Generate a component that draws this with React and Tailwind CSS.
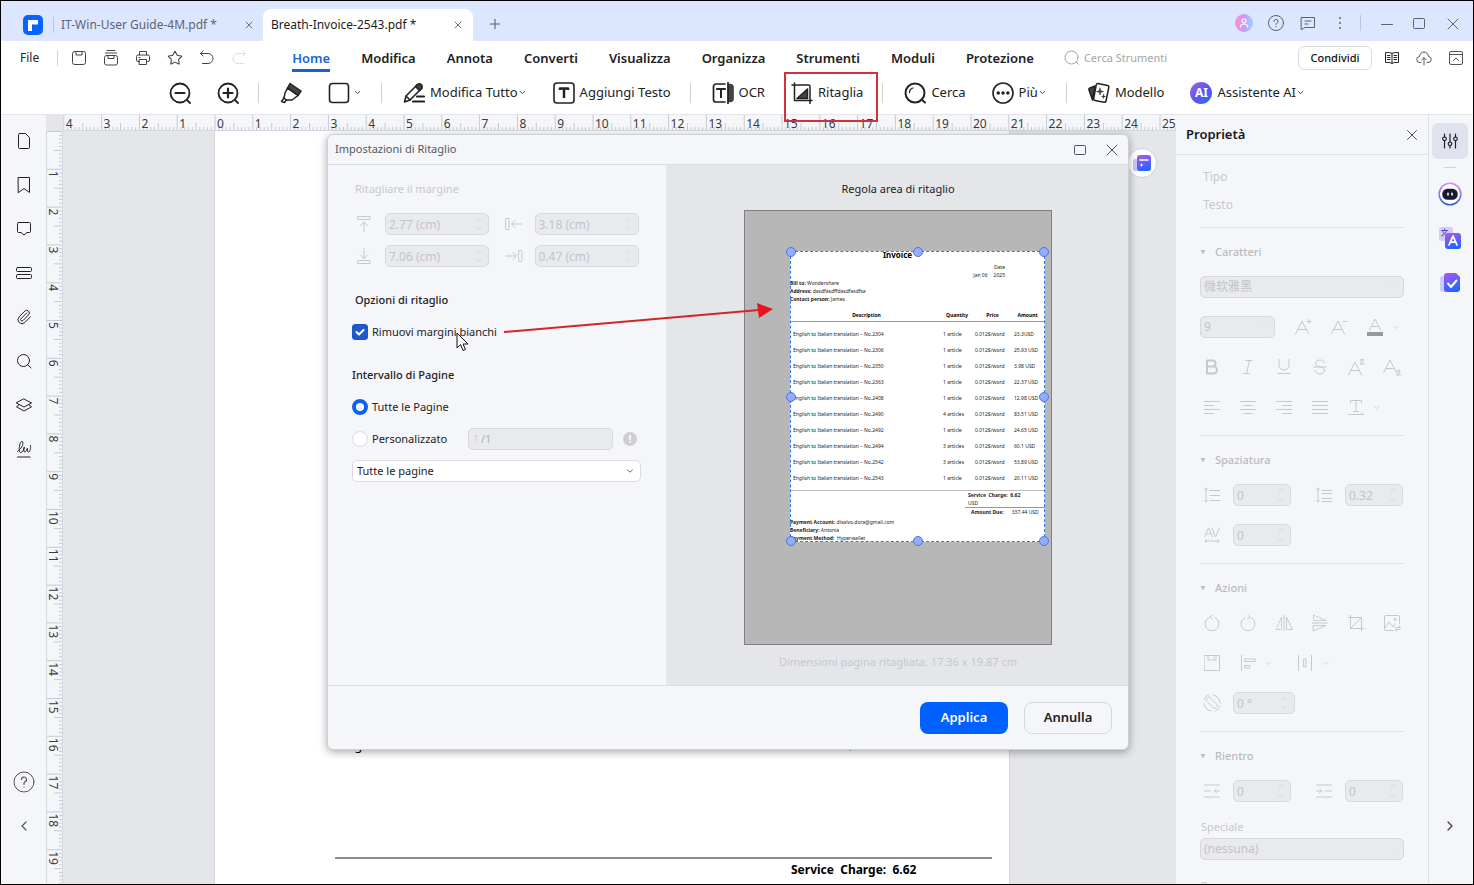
import React, { useState } from 'react';
import { ChevronDown, ChevronUp, ChevronLeft, ChevronRight, X, Star, Paperclip, Plus } from 'lucide-react';

const Svg = ({ w = 16, h, vb, sw = 1, className = '', children }) => (
  <svg
    width={w}
    height={h ?? w}
    viewBox={vb ?? `0 0 ${w} ${h ?? w}`}
    fill="none"
    stroke="currentColor"
    strokeWidth={sw}
    strokeLinecap="round"
    strokeLinejoin="round"
    className={`shrink-0 ${className}`}
    aria-hidden="true"
  >
    {children}
  </svg>
);

const IconButton = ({ label, className = '', children }) => (
  <button type="button" aria-label={label} className={`flex shrink-0 items-center justify-center ${className}`}>
    {children}
  </button>
);

const CM = 37.8;

/* ---------- Title bar ---------- */

const TitleBar = () => (
  <header className="flex h-10 shrink-0 items-center bg-[#dde6ff] text-[#5a6079]">
    <Svg w={20} className="ml-[22px] mt-2">
      <rect width="20" height="20" rx="5" fill="#0a62ff" stroke="none" />
      <path d="M5 5h10v5h-5v2H9v4H5z" fill="#fff" stroke="none" />
      <path d="M9.500 10h5.500M9.500 10v2" stroke="#0a62ff" strokeWidth="1" />
    </Svg>
    <span className="ml-2.5 mt-2 h-4 w-px bg-[#bcc6e2]" />
    <button type="button" className="ml-[7px] mt-2 flex w-[202px] items-center justify-between pr-2 text-xs text-[#5f6472]">
      IT-Win-User Guide-4M.pdf *
      <X size={12} strokeWidth={1.8} />
    </button>
    <button type="button" className="mt-2 flex h-8 w-[210px] items-center justify-between rounded-t-lg bg-white px-2 text-xs text-[#1c1d22]">
      Breath-Invoice-2543.pdf *
      <X size={12} strokeWidth={1.8} className="mr-px text-[#5a6079]" />
    </button>
    <IconButton label="Nuova scheda" className="ml-[14px] mt-1.5 size-4">
      <Plus size={16} strokeWidth={1.6} />
    </IconButton>
    <div className="ml-auto mt-1 flex items-center">
      <span className="flex size-[18px] items-center justify-center rounded-full bg-linear-to-r from-[#ff8fc4] via-[#c79bf5] to-[#8fd3ff] text-white">
        <Svg w={12} sw={1.2}>
          <circle cx="6" cy="4" r="2" />
          <path d="M2.500 10c0-2 1.500-3 3.500-3s3.500 1 3.500 3" />
        </Svg>
      </span>
      <IconButton label="Aiuto" className="ml-[15px]">
        <Svg w={16}>
          <circle cx="8" cy="8" r="7.500" />
          <path d="M6 6.500a2 2 0 1 1 2.700 1.800c-.5.200-.7.500-.7 1.200M8 11.500v.3" />
        </Svg>
      </IconButton>
      <IconButton label="Messaggi" className="ml-4">
        <Svg w={16}>
          <path d="M1.500 2.500h13v10H5l-3.500 2zM5 6h6M5 9h3" />
        </Svg>
      </IconButton>
      <IconButton label="Altro" className="ml-4">
        <Svg w={16}>
          <path d="M8 3v.1M8 8v.1M8 13v.1" strokeWidth="2" />
        </Svg>
      </IconButton>
      <span className="ml-3 h-4 w-px bg-[#bcc6e2]" />
      <IconButton label="Riduci" className="ml-[18px]">
        <Svg w={16}><path d="M2.500 9.500h11" /></Svg>
      </IconButton>
      <IconButton label="Ingrandisci" className="ml-4">
        <Svg w={16}><rect x="2.500" y="3.500" width="11" height="10" rx="1" /></Svg>
      </IconButton>
      <IconButton label="Chiudi" className="ml-[18px] mr-3">
        <Svg w={16}><path d="M3 4l10 10M13 4L3 14" /></Svg>
      </IconButton>
    </div>
  </header>
);

/* ---------- Menu row ---------- */

const menuTabs = ['Home', 'Modifica', 'Annota', 'Converti', 'Visualizza', 'Organizza', 'Strumenti', 'Moduli', 'Protezione'];

const MenuRow = () => (
  <nav className="flex h-[34px] shrink-0 items-center text-[13px] text-[#222]">
    <button type="button" className="ml-[19px] text-xs">File</button>
    <span className="ml-[18px] h-4 w-px bg-[#d3d5da]" />
    <div className="ml-[13px] flex items-center gap-4 text-[#444]">
      <IconButton label="Salva">
        <Svg w={16}>
          <rect x="1.500" y="1.500" width="13" height="13" rx="2" />
          <path d="M5 1.500v3.500h6V1.500" />
        </Svg>
      </IconButton>
      <IconButton label="Salva tutto">
        <Svg w={16}>
          <rect x="1.500" y="5.500" width="13" height="9.500" rx="2" />
          <path d="M2.500 3h11M4 .5h8M5 5.500v3h6v-3" />
        </Svg>
      </IconButton>
      <IconButton label="Stampa">
        <Svg w={16}>
          <path d="M4.500 5V1.500h7V5M4.500 11.500H3A1.500 1.500 0 0 1 1.500 10V6.500A1.500 1.500 0 0 1 3 5h10a1.500 1.500 0 0 1 1.500 1.500V10a1.500 1.500 0 0 1-1.500 1.500h-1.500M4.500 9.500h7v5h-7zM4 7.500h1" />
        </Svg>
      </IconButton>
      <IconButton label="Preferiti"><Star size={16} strokeWidth={1.6} /></IconButton>
      <IconButton label="Annulla operazione">
        <Svg w={16}><path d="M4 1L1.500 3.500 4 6M1.500 3.500H9a5 5 0 0 1 0 10H3.500" /></Svg>
      </IconButton>
      <IconButton label="Ripeti operazione" className="text-[#dcdde0]">
        <Svg w={16}><path d="M12 1l2.500 2.500L12 6M14.500 3.500H7a5 5 0 0 0 0 10h5.500" /></Svg>
      </IconButton>
    </div>
    <div className="ml-[45px] flex h-full items-center gap-[31px] font-semibold">
      {menuTabs.map((t, i) => (
        <button
          key={t}
          type="button"
          className={`h-7 border-b-[3px] pt-0.5 leading-5 ${i === 0 ? 'border-[#1b5fd0] text-[#1b64d8]' : 'border-transparent'}`}
        >
          {t}
        </button>
      ))}
    </div>
    <label className="ml-[30px] flex items-center gap-1 text-[#a3a5aa]">
      <Svg w={16}>
        <circle cx="7.500" cy="7.500" r="6.500" />
        <path d="M12 12l2.500 2.500" />
      </Svg>
      <input type="text" aria-label="Cerca Strumenti" placeholder="Cerca Strumenti" className="w-28 bg-transparent text-[11px] outline-none placeholder:text-[#a3a5aa]" />
    </label>
    <button type="button" className="ml-auto h-6 w-[74px] rounded-md border border-[#dcdde1] text-[11px] font-medium text-[#111]">Condividi</button>
    <IconButton label="Lettura" className="ml-3">
      <Svg w={16} className="text-[#222]">
        <path d="M8 3.500C7 2.500 5 2.500 1.500 2.500v10c3.500 0 5.500 0 6.500 1 1-1 3-1 6.500-1v-10C11 2.500 9 2.500 8 3.500zM8 3.500v10M3.500 5.500H6M3.500 7.500H6M3.500 9.500H6M10 5.500h2.500M10 7.500h2.500M10 9.500h2.500" />
      </Svg>
    </IconButton>
    <IconButton label="Carica" className="ml-4 text-[#555]">
      <Svg w={16}>
        <path d="M5 12.500H4A3 3 0 0 1 3.500 6.500a4.500 4.500 0 0 1 9 0A3 3 0 0 1 12 12.500h-1M8 15V8M5.500 10L8 7.500l2.500 2.500" />
      </Svg>
    </IconButton>
    <IconButton label="Comprimi barra" className="ml-4 mr-[9px] text-[#555]">
      <Svg w={16}>
        <rect x="1.500" y="1.500" width="13" height="13" rx="1.500" />
        <path d="M1.500 4.500h13M5.500 10.500L8 8l2.500 2.500" />
      </Svg>
    </IconButton>
  </nav>
);

/* ---------- Toolbar ---------- */

const Tool = ({ label, icon, text, chevron }) => (
  <button type="button" aria-label={text ? undefined : label} className="mx-[13px] flex shrink-0 items-center text-[13px] text-[#222]">
    {icon}
    {text && <span className="ml-[5px]">{text}</span>}
    {chevron && <ChevronDown size={9} strokeWidth={2.200} className={text ? '' : 'ml-[3px]'} />}
  </button>
);

const Separator = () => <span className="ml-1.5 mr-2 h-5 w-px shrink-0 bg-[#cfd1d6]" />;

const Toolbar = () => (
  <div className="flex h-10 shrink-0 items-center border-b border-[#e3e5ea] pb-1 pl-[155px] text-[#444]">
    <Tool label="Riduci zoom" icon={
      <Svg w={22} sw={1.800}><circle cx="11" cy="11" r="9.500" /><path d="M18 18l3 3" /><path d="M6.500 11h9" strokeWidth="2.200" /></Svg>
    } />
    <Tool label="Aumenta zoom" icon={
      <Svg w={22} sw={1.800}><circle cx="11" cy="11" r="9.500" /><path d="M18 18l3 3" /><path d="M6.500 11h9M11 6.500v9" strokeWidth="2.200" /></Svg>
    } />
    <Separator />
    <Tool label="Evidenzia" icon={
      <Svg w={22} sw={1.500}>
        <path d="M10 1.500L21 9l-3 4.500L7.500 6z" fill="#444" />
        <path d="M7.500 6l10.500 7.500-6 4.500H6.500L4 16l1-5z" />
        <path d="M4 16l-2.500 3.500 3 1 2-2.500" />
      </Svg>
    } />
    <Tool label="Forme" chevron icon={
      <Svg w={22} sw={1.600}><rect x="1.500" y="1.500" width="19" height="19" rx="3" /></Svg>
    } />
    <Separator />
    <Tool text="Modifica Tutto" chevron icon={
      <Svg w={22} sw={1.600}>
        <path d="M1.500 20L3 14 14 3a3 3 0 0 1 4 4L7 18z" />
        <path d="M12.500 4.500L15 2.200a3 3 0 0 1 4 4L16.500 8.500z" fill="#444" />
        <path d="M3 14l4 4" />
        <path d="M14 14.500h7M10 19.500h11" strokeWidth="2.200" />
      </Svg>
    } />
    <Tool text="Aggiungi Testo" icon={
      <Svg w={22} sw={1.600}>
        <rect x="1" y="1" width="20" height="20" rx="3" />
        <path d="M7 8V6.500h8V8M11 7v9" strokeWidth="2.500" strokeLinecap="butt" />
      </Svg>
    } />
    <Separator />
    <Tool text="OCR" icon={
      <Svg w={22} sw={1.700}>
        <path d="M13 2H4a2.500 2.500 0 0 0-2.500 2.500v13A2.500 2.500 0 0 0 4 20h9" />
        <path d="M5 8V7h8v1M9 7.500V16" strokeWidth="2" strokeLinecap="butt" />
        <path d="M16.500 2.500h2A2.500 2.500 0 0 1 21 5v12a2.500 2.500 0 0 1-2.500 2.500h-2z" fill="#444" stroke="#444" />
        <path d="M16 .5v21" />
      </Svg>
    } />
    <Tool text="Ritaglia" icon={
      <Svg w={22} sw={1.500}>
        <path d="M3.500 1v17.500H21M1 3h16.500a1.500 1.500 0 0 1 1.500 1.500V21.500" />
        <path d="M6 16.500L16.500 7v9.500z" fill="#444" />
      </Svg>
    } />
    <Separator />
    <Tool text="Cerca" icon={
      <Svg w={22} sw={2}><circle cx="11" cy="11" r="9.500" /><path d="M17.500 17.500l3.500 3" /><path d="M5.500 10.500A5 5 0 0 1 9 6" strokeWidth="1.300" /></Svg>
    } />
    <Tool text="Più" chevron icon={
      <Svg w={22} sw={1.600}><circle cx="11" cy="11" r="10" /><path d="M6.200 11h.1M11 11h.1M15.800 11h.1" strokeWidth="3.400" /></Svg>
    } />
    <Separator />
    <Tool text="Modello" icon={
      <Svg w={22} sw={1.500}>
        <path d="M7 4L2 6c-1 .4-1.300 1-1 2l3.500 10z" fill="#444" />
        <path d="M10 1.500l9.500 2c1 .2 1.500 1 1.300 2l-2.800 13.500c-.2 1-1 1.500-2 1.300l-9-1.800c-1-.2-1.500-1-1.300-2L8.200 3c.2-1 .9-1.600 1.800-1.500z" fill="#fff" />
        <path d="M12 6l.8 2.700 2.700.8-2.700.8L12 13l-.8-2.700-2.700-.8 2.700-.8zM15.500 12.500l.4 1.600 1.600.4-1.600.4-.4 1.600-.4-1.600-1.600-.4 1.600-.4z" fill="#444" strokeWidth=".5" />
      </Svg>
    } />
    <Tool text="Assistente AI" chevron icon={
      <span className="flex size-[22px] items-center justify-center rounded-full bg-linear-to-br from-[#a55cf0] via-[#5b57f0] to-[#1668ff] text-xs font-bold text-white">AI</span>
    } />
  </div>
);

/* ---------- Rulers ---------- */

const tickSet = (from, to) => {
  const ticks = [];
  for (let i = from * 10; i <= to * 10; i++) ticks.push(i);
  return ticks;
};

const HorizontalRuler = () => (
  <svg className="h-4 min-w-0 flex-1 border-b border-[#d5d8e0] bg-[#f5f6fa]" aria-hidden="true">
    {tickSet(-4, 26).map((i) => (
      <line key={i} x1={152 + (i * CM) / 10} x2={152 + (i * CM) / 10} y1={i % 10 === 0 ? 0 : i % 5 === 0 ? 8 : 12} y2="16" stroke="#c6cad5" />
    ))}
    {Array.from({ length: 30 }, (_, n) => n - 4).map((n) => (
      <text key={n} x={154 + n * CM} y="13" fontSize="12" fill="#3a3b40">{Math.abs(n)}</text>
    ))}
  </svg>
);

const VerticalRuler = () => (
  <svg className="w-[17px] shrink-0 border-x border-[#d5d8e0] bg-[#f5f6fa]" aria-hidden="true">
    {tickSet(0, 20).map((i) => (
      <line key={i} y1={0.500 + (i * CM) / 10} y2={0.500 + (i * CM) / 10} x1={i % 10 === 0 ? 0 : i % 5 === 0 ? 7 : 12} x2="16" stroke="#c6cad5" />
    ))}
    {Array.from({ length: 19 }, (_, n) => n + 1).map((n) => (
      <text key={n} transform={`translate(2 ${2 + n * CM}) rotate(90)`} fontSize="12" fill="#3a3b40">{n}</text>
    ))}
  </svg>
);

/* ---------- Left rail ---------- */

const leftItems = [
  ['Miniature', <Svg w={16}><path d="M3.500 .5h6l4 4v10a1 1 0 0 1-1 1h-9a1 1 0 0 1-1-1v-13a1 1 0 0 1 1-1z" /></Svg>],
  ['Segnalibri', <Svg w={16}><path d="M2.500 .5h11v15L8 11.500 2.500 15.500z" /></Svg>],
  ['Commenti', <Svg w={16}><path d="M2.500 1.500h11a1 1 0 0 1 1 1v8a1 1 0 0 1-1 1H11l-3 2.500-3-2.500H2.500a1 1 0 0 1-1-1v-8a1 1 0 0 1 1-1z" /></Svg>],
  ['Campi', <Svg w={16}><rect x=".5" y="2.500" width="15" height="4" rx="1" /><rect x=".5" y="9.500" width="15" height="4" rx="1" /></Svg>],
  ['Allegati', <Paperclip size={16} strokeWidth={1.500} />],
  ['Cerca', <Svg w={16}><circle cx="7.500" cy="7.500" r="6" /><path d="M12 12l3 3" /></Svg>],
  ['Livelli', <Svg w={16}><path d="M8 2l7.500 4L8 10 .5 6zM3 8L.5 9.800 8 14l7.500-4.200L13 8" /></Svg>],
  ['Firma', <Svg w={16} h={18}><path d="M1.500 11.500C5 9 7.500 5 6.800 2.200 6.300.2 4.500 1.500 3.700 5c-.7 3.500-1 7.500 1 7.500 1.800 0 2.800-2.500 3.600-5.500-.5 3-.6 5 .4 5 1.500 0 2.500-3 2.800-4-.2 2-.2 4 1 4 1.700 0 2.500-4 2-6.500M1.500 17h12.500" /></Svg>],
];

const LeftRail = () => (
  <aside className="flex w-[45px] shrink-0 flex-col bg-[#f5f6fa] pt-1 text-[#222]">
    {leftItems.map(([label, icon]) => (
      <IconButton key={label} label={label} className="h-11">{icon}</IconButton>
    ))}
    <IconButton label="Guida" className="mt-auto h-11 text-[#555]">
      <Svg w={22}>
        <circle cx="11" cy="11" r="10" />
        <path d="M8.500 8.500a2.500 2.500 0 1 1 3.500 2.300c-.7.400-1 .8-1 1.700v1M11 16v.2" strokeWidth="1.200" />
      </Svg>
    </IconButton>
    <IconButton label="Comprimi" className="mb-9 h-11 text-[#555]">
      <ChevronLeft size={16} strokeWidth={1.800} />
    </IconButton>
  </aside>
);

/* ---------- Right rail ---------- */

const RightRail = () => (
  <aside className="flex w-[45px] shrink-0 flex-col items-center border-l border-[#dcdee4] bg-[#f5f6fa] pr-0.5 pt-2">
    <IconButton label="Proprietà" className="size-9 rounded-md bg-[#dfe3ed] text-[#222]">
      <Svg w={16} sw={1.200}>
        <path d="M2.500 1v3M2.500 7.500V15M8 1v8M8 12.500V15M13.500 1v3M13.500 7.500V15" />
        <circle cx="2.500" cy="5.800" r="1.800" /><circle cx="8" cy="10.800" r="1.800" /><circle cx="13.500" cy="5.800" r="1.800" />
      </Svg>
    </IconButton>
    <span className="my-2 h-px w-3 bg-[#d0d3da]" />
    <IconButton label="Assistente" className="h-9">
      <Svg w={24} sw={1.500}>
        <defs>
          <linearGradient id="ring" x1="0" y1="0" x2="0" y2="1"><stop stopColor="#e38af0" /><stop offset="1" stopColor="#2d62d8" /></linearGradient>
        </defs>
        <circle cx="12" cy="12" r="10.800" stroke="url(#ring)" fill="#fff" />
        <rect x="5" y="7.500" width="14" height="9.500" rx="4.500" fill="#181a30" stroke="#181a30" />
        <path d="M10 11.200v1.800M14 11.200v1.800" stroke="#fff" strokeWidth="1.600" />
      </Svg>
    </IconButton>
    <IconButton label="Traduci" className="h-[52px]">
      <Svg w={24}>
        <defs>
          <linearGradient id="tile" x1="0.300" y1="0" x2="0.600" y2="1"><stop stopColor="#a35af0" /><stop offset="1" stopColor="#1c66ff" /></linearGradient>
        </defs>
        <rect x="1" y="1" width="14" height="14" rx="2.500" fill="#d3cdf8" stroke="none" />
        <path d="M3.500 4.500h6M6.500 3v1.500M8.500 4.500c-.5 2.500-2.500 4.500-5 5.500M4.500 4.500c.5 2 1.500 3.500 3 4.500" stroke="#4c4bd8" />
        <rect x="7" y="7" width="16" height="16" rx="3" fill="url(#tile)" stroke="none" />
        <path d="M11 19l4-9 4 9M12.300 16.200h5" stroke="#fff" strokeWidth="1.800" />
      </Svg>
    </IconButton>
    <IconButton label="Controlla" className="h-9">
      <Svg w={24}>
        <rect x="2" y="6" width="12" height="16" rx="3" fill="#c9cdfb" stroke="none" />
        <path d="M9 3h9l4 4v12a3 3 0 0 1-3 3H9a3 3 0 0 1-3-3V6a3 3 0 0 1 3-3z" fill="url(#tile)" stroke="none" />
        <path d="M10 13.500l3 3.500 5.500-6.500" stroke="#fff" strokeWidth="2" />
      </Svg>
    </IconButton>
    <IconButton label="Espandi" className="mb-9 mt-auto h-11 text-[#444]">
      <ChevronRight size={16} strokeWidth={2} />
    </IconButton>
  </aside>
);

/* ---------- Shared form fields ---------- */

const NumberField = ({ label, value, className = 'w-[58px]' }) => (
  <span className={`relative flex shrink-0 ${className}`}>
    <input
      type="text"
      disabled
      aria-label={label}
      defaultValue={value}
      className="h-[22px] w-full rounded-[5px] border border-[#d6d8dd] bg-[#e9eaee] px-[3px] text-xs text-[#c2c4c9]"
    />
    <span className="pointer-events-none absolute inset-y-0 right-1.5 flex flex-col justify-center text-[#cdcfd4]">
      <ChevronUp size={9} strokeWidth={2} />
      <ChevronDown size={9} strokeWidth={2} />
    </span>
  </span>
);

const DisabledSelect = ({ label, value, className = 'w-full' }) => (
  <span className={`relative flex ${className}`}>
    <select disabled aria-label={label} className="h-[22px] w-full appearance-none rounded-[5px] border border-[#d6d8dd] bg-[#e9eaee] px-[3px] text-xs text-[#c2c4c9] opacity-100">
      <option>{value}</option>
    </select>
    <ChevronDown size={10} strokeWidth={2} className="pointer-events-none absolute right-1.5 top-1.5 text-[#dcdee2]" />
  </span>
);

/* ---------- Properties panel ---------- */

const Section = ({ title, children }) => (
  <section className="border-t border-[#dfe1e6] pb-2 pt-[9px]">
    <h3 className="flex h-[30px] items-center text-[11px] font-medium text-[#b9bbc1]">
      <Svg w={6} className="mr-[9px]"><path d="M.5 1h5L3 5.500z" fill="currentColor" stroke="none" /></Svg>
      {title}
    </h3>
    {children}
  </section>
);

const Row = ({ children }) => <div className="flex h-10 items-center gap-3">{children}</div>;

const Cell = ({ label, children }) => (
  <button type="button" disabled aria-label={label} className="flex w-6 shrink-0 items-center justify-center">
    {children}
  </button>
);

const Chev = () => <ChevronDown size={9} strokeWidth={2} className="-ml-2 shrink-0" />;

const Pair = ({ label, icon, value }) => (
  <div className="flex items-center gap-[9px]">
    <span className="flex w-6 justify-center">{icon}</span>
    <NumberField label={label} value={value} />
  </div>
);

const PropertiesPanel = () => (
  <aside className="flex w-[252px] shrink-0 flex-col overflow-hidden bg-[#f5f6fa] text-[#c6c8ce]">
    <div className="flex h-10 shrink-0 items-center justify-between border-b border-[#dfe1e6] px-2.5">
      <h2 className="text-[13px] font-semibold text-[#17181c]">Proprietà</h2>
      <IconButton label="Chiudi pannello"><Svg w={12} className="text-[#4c5270]"><path d="M1.500 1.500l9 9M10.500 1.500l-9 9" /></Svg></IconButton>
    </div>
    <div className="min-h-0 flex-1 overflow-hidden px-6 pt-2">
      <div className="pb-2 text-xs leading-7">
        <p className="pl-[3px]">Tipo</p>
        <p className="pl-[3px]">Testo</p>
      </div>
      <Section title="Caratteri">
        <Row><DisabledSelect label="Carattere" value="微软雅黑" /></Row>
        <Row>
          <DisabledSelect label="Dimensione" value="9" className="mr-1 w-[75px]" />
          <Cell label="Aumenta dimensione"><Svg w={18}><path d="M1.500 16L8 3l6.500 13M4 11.500h8M13 3.500h4M15 1.500v4" /></Svg></Cell>
          <Cell label="Riduci dimensione"><Svg w={18}><path d="M1.500 16L8 3l6.500 13M4 11.500h8M13 3.500h4" /></Svg></Cell>
          <Cell label="Colore"><Svg w={18}><path d="M3.500 12L9 1l5.500 11M5.500 8.500h7" /><path d="M1 16h16" stroke="#97999e" strokeWidth="4" strokeLinecap="butt" /></Svg></Cell>
          <Chev />
        </Row>
        <Row>
          <Cell label="Grassetto"><Svg w={16} sw={2}><path d="M3 1.500h5.500a3 3 0 0 1 0 6H3zM3 7.500h6.500a3.500 3.500 0 0 1 0 7H3z" /></Svg></Cell>
          <Cell label="Corsivo"><Svg w={16}><path d="M6 1.500h6M3.500 14.500h6M9.500 1.500l-3 13" /></Svg></Cell>
          <Cell label="Sottolineato"><Svg w={16}><path d="M3 .5V6a5 5 0 0 0 10 0V.5M2 14.500h12" /></Svg></Cell>
          <Cell label="Barrato"><Svg w={16}><path d="M12.500 4C12 2 10 1 8 1S3.500 2.200 3.500 4.500c0 4 9 2.500 9 6.500 0 2.500-2.500 4-4.500 4s-4.500-1-5-3.500M1.500 8h13" /></Svg></Cell>
          <Cell label="Apice"><Svg w={18}><path d="M1.500 17L8 4l6.500 13M4 12.500h8" /><path d="M13.500 2.500c.5-1.500 3-1.500 3 0 0 1-3 2.500-3 3.500h3.500" strokeWidth="1.200" /></Svg></Cell>
          <Cell label="Pedice"><Svg w={18} h={18}><path d="M.5 15L7 2l6.500 13M3 10.500h8" /><path d="M14 13.500c.5-1.500 3-1.500 3 0 0 1-3 2-3 3.500h3.500" strokeWidth="1.200" /></Svg></Cell>
        </Row>
        <Row>
          <Cell label="Allinea a sinistra"><Svg w={16}><path d="M.5 2.500h15M.5 6.500h9M.5 10.500h15M.5 14.500h9" /></Svg></Cell>
          <Cell label="Centra"><Svg w={16}><path d="M.5 2.500h15M4 6.500h8M.5 10.500h15M4 14.500h8" /></Svg></Cell>
          <Cell label="Allinea a destra"><Svg w={16}><path d="M.5 2.500h15M6.500 6.500h9M.5 10.500h15M6.500 14.500h9" /></Svg></Cell>
          <Cell label="Giustifica"><Svg w={16}><path d="M.5 2.500h15M.5 6.500h15M.5 10.500h15M.5 14.500h15" /></Svg></Cell>
          <Cell label="Direzione testo"><Svg w={16}><path d="M2.500 4V1.500h11V4M8 1.500v11M5.500 12.500h5M.5 15.500h15M13.500 14l2 1.500" /></Svg></Cell>
          <Chev />
        </Row>
      </Section>
      <Section title="Spaziatura">
        <div className="flex h-10 items-center justify-between pr-px">
          <Pair label="Interlinea" value="0" icon={<Svg w={16}><path d="M2 1v14M.5 2.500L2 1l1.500 1.500M.5 13.500L2 15l1.500-1.500M6 3.500h10M6 8.500h10M6 13.500h10" /></Svg>} />
          <Pair label="Spaziatura paragrafo" value="0.32" icon={<Svg w={16}><path d="M2 1v14M.5 2.500L2 1l1.500 1.500M.5 13.500L2 15l1.500-1.500M6 3.500h10M6 6.500h10M6 11.500h10M6 14.500h10" /></Svg>} />
        </div>
        <div className="flex h-10 items-center">
          <Pair label="Spaziatura caratteri" value="0" icon={<Svg w={16}><path d="M.5 10L4.500 1l4 9M2 7h5M8 1l3.500 9 4-9M1 14h14M2.500 12.500L1 14l1.500 1.500M13.500 12.500L15 14l-1.500 1.500" /></Svg>} />
        </div>
      </Section>
      <Section title="Azioni">
        <Row>
          <Cell label="Ruota a sinistra"><Svg w={16}><path d="M5 2.500a7 7 0 1 0 6 0M8.500 0L6 2l2.500 2.500" /></Svg></Cell>
          <Cell label="Ruota a destra"><Svg w={16}><path d="M11 2.500a7 7 0 1 1-6 0M7.500 0L10 2 7.500 4.500" /></Svg></Cell>
          <Cell label="Rifletti in orizzontale"><Svg w={18} h={16}><path d="M9 .5v15M11.500 2.500v12H17z" /><path d="M6.500 2.500v12H1z" strokeDasharray="2 1.500" /></Svg></Cell>
          <Cell label="Rifletti in verticale"><Svg w={16} h={18}><path d="M.5 9h15M1.500 11.500H14L1.500 17z" /><path d="M1.500 6.500H14L1.500 1z" strokeDasharray="2 1.500" /></Svg></Cell>
          <Cell label="Ritaglia immagine"><Svg w={16}><path d="M2.500 0v13.500H16M0 2.500h13.500V16M3 13L13 3" /></Svg></Cell>
          <Cell label="Sostituisci immagine"><Svg w={17}><path d="M9 15.500H2A1.500 1.500 0 0 1 .5 14V2A1.500 1.500 0 0 1 2 .5h12A1.500 1.500 0 0 1 15.500 2v7M1 13l4-6 4 5 2-3M11 12.500h5.500L15 11M16.500 14.500H11l1.500 1.500" /><circle cx="11" cy="4.500" r="1" /></Svg></Cell>
        </Row>
        <div className="flex h-10 items-center gap-5">
          <div className="flex items-center gap-3">
            <Cell label="Salva immagine"><Svg w={16}><path d="M.5.5h15v15H.5zM4 .5V5h8V.5M10 2v1" /></Svg></Cell>
            <Cell label="Allinea oggetti"><Svg w={16}><path d="M1.500 .5v15M5 4h10M5 6.500h10M5 4v2.500M15 4v2.500M5 10.500h5v2.500H5z" /></Svg></Cell>
            <Chev />
          </div>
          <div className="flex items-center gap-3">
            <Cell label="Distribuisci oggetti"><Svg w={16}><path d="M1.500 .5v15M14.500 .5v15M7 4h2v8H7z" /></Svg></Cell>
            <Chev />
          </div>
        </div>
        <div className="flex h-10 items-center gap-[9px]">
          <span className="flex w-6 justify-center">
            <Svg w={18}><path d="M6.500 3l8.500 8.500-3.500 3.500L3 6.500zM1 5.500A8 8 0 0 1 5.500 1M17 12.500a8 8 0 0 1-4.500 4.500M1 9.500c.5 4 3 6.500 6.500 7.500M17 8.500C16.500 4.500 14 2 10.500 1" /></Svg>
          </span>
          <NumberField label="Rotazione" value="0 °" className="w-[62px]" />
        </div>
      </Section>
      <Section title="Rientro">
        <div className="flex h-10 items-center justify-between pr-px">
          <Pair label="Rientro a destra" value="0" icon={<Svg w={16}><path d="M.5 2h15M.5 14h15M.5 8h6M10.500 8h5M12.500 6l-2 2 2 2" /></Svg>} />
          <Pair label="Rientro a sinistra" value="0" icon={<Svg w={16}><path d="M.5 2h15M.5 14h15M.5 8h5M9 8h6.500M3.500 6l2 2-2 2" /></Svg>} />
        </div>
        <p className="mt-1.5 pl-px text-[11px] leading-5">Speciale</p>
        <div className="mt-px"><DisabledSelect label="Speciale" value="(nessuna)" /></div>
        <p className="mt-4 pl-px text-[11px] leading-5">Per</p>
      </Section>
    </div>
  </aside>
);

/* ---------- Crop preview ---------- */

const items = [
  ['No.2304', '1 article', '23.3USD'],
  ['No.2306', '1 article', '25.93 USD'],
  ['No.2350', '1 article', '3.98 USD'],
  ['No.2363', '1 article', '22.37 USD'],
  ['No.2408', '1 article', '12.98 USD'],
  ['No.2490', '4 articles', '83.51 USD'],
  ['No.2492', '1 article', '24.65 USD'],
  ['No.2494', '3 articles', '60.1 USD'],
  ['No.2542', '3 articles', '53.89 USD'],
  ['No.2543', '1 article', '20.11 USD'],
];

const handles = [
  'left-0 top-0', 'left-1/2 top-0', 'left-full top-0',
  'left-0 top-1/2', 'left-full top-1/2',
  'left-0 top-full', 'left-1/2 top-full', 'left-full top-full',
];

const InvoicePreview = () => (
  <div className="relative h-[291px] w-[255px]">
    <div className="h-full bg-white text-[5px] leading-2 text-[#222]">
      <p className="pr-10 text-center text-[8px] font-bold text-black">Invoice</p>
      <div className="mt-1 pr-10 text-right">
        <p>Date</p>
        <p>Jan 06<span className="ml-1.5">2025</span></p>
      </div>
      <p><b>Bill to:</b> Wondershare</p>
      <p><b>Address:</b> dasdfasdffdasdfasdfsa</p>
      <p><b>Contact person:</b> James</p>
      <table className="mt-1.5 w-full table-fixed border-collapse">
        <thead>
          <tr className="h-3 border-b border-[#999] align-middle font-bold text-black">
            <th className="w-[153px]">Description</th>
            <th className="w-8 text-left"><span className="pl-[3px]">Quantity</span></th>
            <th className="w-[39px] pr-1">Price</th>
            <th className="pr-1">Amount</th>
          </tr>
        </thead>
        <tbody>
          <tr className="h-[5px]"><td /></tr>
          {items.map(([no, qty, amount]) => (
            <tr key={no} className="h-4">
              <td className="pl-[3px]">English to Italian translation – {no}</td>
              <td>{qty}</td>
              <td>0.012$/word</td>
              <td>{amount}</td>
            </tr>
          ))}
        </tbody>
      </table>
      <div className="mt-1 border-t border-[#bbb]">
        <div className="ml-auto w-20">
          <p className="pl-[3px] font-bold">Service&nbsp; Charge:&nbsp; 6.62</p>
          <p className="border-b border-[#999] pl-[3px]">USD</p>
          <p className="pl-1.5"><b>Amount Due:</b><span className="ml-2">337.44 USD</span></p>
        </div>
      </div>
      <div className="mt-0.5">
        <p><b>Payment Account</b>: disalvo.dora@gmail.com</p>
        <p><b>Beneficiary:</b> Antonia</p>
        <p><b>Payment Method:</b>&nbsp; Hyperwallet</p>
      </div>
    </div>
    <div className="absolute inset-0 border border-dashed border-[#2f78ea]">
      {handles.map((pos) => (
        <span key={pos} className={`absolute size-2.5 -translate-x-1/2 -translate-y-1/2 rounded-full border border-[#4b74e6] bg-[#94adff] ${pos}`} />
      ))}
    </div>
  </div>
);

/* ---------- Crop dialog ---------- */

const MarginField = ({ label, icon, value }) => (
  <div className="flex items-center gap-3">
    <span className="flex w-[18px] justify-center text-[#c6c8ce]">{icon}</span>
    <NumberField label={label} value={value} className="w-[104px]" />
  </div>
);

const CropDialog = () => {
  const [trim, setTrim] = useState(true);
  const [range, setRange] = useState('all');

  return (
    <div role="dialog" aria-label="Impostazioni di Ritaglio" className="absolute left-[326px] top-[133px] flex w-[802px] flex-col overflow-hidden rounded-md border border-[#cfd1d6] bg-[#f5f6fa] text-[11px] text-[#222] shadow-[0_2px_8px_rgba(0,0,0,0.35)]">
      <div className="flex h-[30px] shrink-0 items-center border-b border-[#dcdee4] pl-[7px] pr-2.5 text-[#55565c]">
        <h2 className="mr-auto">Impostazioni di Ritaglio</h2>
        <IconButton label="Ingrandisci finestra"><Svg w={12} className="text-[#4c5270]"><rect x=".5" y="1.500" width="11" height="9" rx="1" /></Svg></IconButton>
        <IconButton label="Chiudi finestra" className="ml-5"><Svg w={12} className="text-[#4c5270]"><path d="M1 1l10 10M11 1L1 11" /></Svg></IconButton>
      </div>
      <div className="flex h-[520px]">
        <div className="w-[338px] shrink-0 pl-6 pt-2">
          <h3 className="flex h-8 items-center pl-[3px] text-[#c6c8ce]">Ritagliare il margine</h3>
          <div className="mt-[3px] grid w-[286px] grid-cols-2 gap-x-4 pl-[3px]">
            <div className="flex h-8 items-center">
              <MarginField label="Margine superiore" value="2.77 (cm)" icon={<Svg w={16}><path d="M2 .5h12v3H2zM8 16V6M4.500 9.500L8 6l3.500 3.500" /></Svg>} />
            </div>
            <div className="flex h-8 items-center">
              <MarginField label="Margine sinistro" value="3.18 (cm)" icon={<Svg w={18} h={14}><path d="M1 1.500h3v11H1zM17 7H7M10 3.500L6.500 7l3.500 3.500" /></Svg>} />
            </div>
            <div className="flex h-8 items-center">
              <MarginField label="Margine inferiore" value="7.06 (cm)" icon={<Svg w={16}><path d="M2 12.500h12v3H2zM8 .5v10M4.500 7L8 10.500 11.500 7" /></Svg>} />
            </div>
            <div className="flex h-8 items-center">
              <MarginField label="Margine destro" value="0.47 (cm)" icon={<Svg w={18} h={14}><path d="M14 1.500h3v11h-3zM1 7h10M8 3.500L11.500 7 8 10.500" /></Svg>} />
            </div>
          </div>
          <h3 className="mt-3 flex h-8 items-center pl-[3px] font-medium">Opzioni di ritaglio</h3>
          <label className="flex h-8 items-center gap-1">
            <span className="relative flex">
              <input type="checkbox" checked={trim} onChange={(e) => setTrim(e.target.checked)} className="size-4 appearance-none rounded-[3px] border border-[#1e56c4] bg-white checked:bg-[#1e5acb]" />
              <Svg w={16} sw={2} className="pointer-events-none absolute inset-0 text-white"><path d="M4.500 8l2.500 2.500 4.500-4.500" /></Svg>
            </span>
            Rimuovi margini bianchi
          </label>
          <h3 className="mt-[11px] flex h-8 items-center font-medium">Intervallo di Pagine</h3>
          <label className="flex h-8 items-center gap-1">
            <input type="radio" name="range" checked={range === 'all'} onChange={() => setRange('all')} className="size-4 appearance-none rounded-full border border-[#dcdde2] bg-white checked:border-4 checked:border-[#0d61ee]" />
            Tutte le Pagine
          </label>
          <div className="flex h-8 items-center">
            <label className="flex w-[116px] items-center gap-1">
              <input type="radio" name="range" checked={range === 'custom'} onChange={() => setRange('custom')} className="size-4 appearance-none rounded-full border border-[#dcdde2] bg-white checked:border-4 checked:border-[#0d61ee]" />
              Personalizzato
            </label>
            <span className="flex h-[22px] w-[145px] items-center rounded-[5px] border border-[#d6d8dd] bg-[#e9eaee] pl-1 text-[#b0b2b8]">
              <input type="text" disabled aria-label="Pagine" defaultValue="1" className="w-2 text-[#cfd1d6]" />
              /1
            </span>
            <span className="ml-2.5 flex size-[14px] items-center justify-center rounded-full bg-[#cdcfd4] text-[10px] font-bold text-white">!</span>
          </div>
          <div className="flex h-8 items-center">
            <span className="relative flex w-[289px]">
              <select aria-label="Filtro pagine" className="h-[22px] w-full appearance-none rounded-[5px] border border-[#dcdde2] bg-white px-1 text-[11px]">
                <option>Tutte le pagine</option>
              </select>
              <ChevronDown size={10} strokeWidth={2} className="pointer-events-none absolute right-1.5 top-1.5 text-[#444]" />
            </span>
          </div>
        </div>
        <div className="flex flex-1 flex-col items-center bg-[#e5e6ea] pl-0.5">
          <h3 className="mt-2 leading-8">Regola area di ritaglio</h3>
          <div className="mt-[5px] h-[435px] w-[308px] border border-[#808080] bg-[#b7b7b7] pl-[45px] pt-10">
            <InvoicePreview />
          </div>
          <p className="mt-1 leading-[26px] text-[#c6c8ce]">Dimensioni pagina ritagliata: 17.36 x 19.87 cm</p>
        </div>
      </div>
      <div className="flex h-16 items-center justify-end gap-4 border-t border-[#dcdee4] px-4 text-[13px] font-semibold">
        <button type="button" className="h-8 w-22 rounded-lg bg-[#0061ff] text-white">Applica</button>
        <button type="button" className="h-8 w-22 rounded-lg border border-[#d6d8de] text-[#222]">Annulla</button>
      </div>
    </div>
  );
};

/* ---------- Document canvas ---------- */

const Canvas = () => (
  <main className="flex min-w-0 flex-1 flex-col bg-[#e5e6ea]">
    <div className="flex h-4 shrink-0">
      <span className="w-[17px] shrink-0" />
      <HorizontalRuler />
    </div>
    <div className="flex min-h-0 flex-1">
      <VerticalRuler />
      <div className="relative min-w-0 flex-1 overflow-hidden">
        <article className="ml-[151px] h-full w-[796px] border-x border-[#d3d5da] bg-white pt-[604px] text-[13px] text-black">
          <p className="flex pl-[124px] leading-5">
            <span className="w-[474px]">English to Italian translation – No.2542</span>
            <span>0.012$/word</span>
          </p>
          <hr className="ml-[120px] mr-[17px] mt-[102px] border-t-2 border-[#8c8c8c]" />
          <p className="pl-[576px] text-xs font-bold leading-[22px]">Service&nbsp; Charge:&nbsp; 6.62</p>
        </article>
        <button type="button" aria-label="Strumenti AI" className="absolute right-[19px] top-[17px] flex size-[30px] items-center justify-center rounded-full border border-[#cdd1e0] bg-white">
          <Svg w={18}>
            <rect x="0" y="5" width="10" height="12" rx="2" fill="#c9c6f8" stroke="none" />
            <rect x="4" y="1" width="14" height="16" rx="3" fill="url(#tile)" stroke="none" />
            <path d="M7 6h8" stroke="#fff" strokeWidth="1.500" />
            <path d="M8.500 9l.6 1.400 1.400.6-1.400.6-.6 1.400-.6-1.400-1.400-.6 1.400-.6z" fill="#fff" stroke="none" />
          </Svg>
        </button>
      </div>
    </div>
  </main>
);

export default function App() {
  return (
    <div className="relative flex h-screen flex-col overflow-hidden border border-black bg-white font-['Noto_Sans','Noto_Sans_CJK_SC',sans-serif]">
      <TitleBar />
      <MenuRow />
      <Toolbar />
      <div className="flex min-h-0 flex-1">
        <LeftRail />
        <Canvas />
        <PropertiesPanel />
        <RightRail />
      </div>
      <CropDialog />
      <span className="pointer-events-none absolute left-[783px] top-[71px] h-[50px] w-[94px] border-2 border-[#d3313a]" />
      <svg className="pointer-events-none absolute left-[502px] top-[299px]" width="272" height="36" aria-hidden="true">
        <path d="M1 32L256 10" stroke="#d3242c" strokeWidth="2" />
        <path d="M254 3l16 6-14 9z" fill="#e8131d" />
      </svg>
      <svg className="pointer-events-none absolute left-[455px] top-[331px]" width="14" height="20" aria-hidden="true">
        <path d="M1 1v15l3.500-3.500 2.500 6 2.500-1-2.500-5.500h5z" fill="#fff" stroke="#111" />
      </svg>
    </div>
  );
}
